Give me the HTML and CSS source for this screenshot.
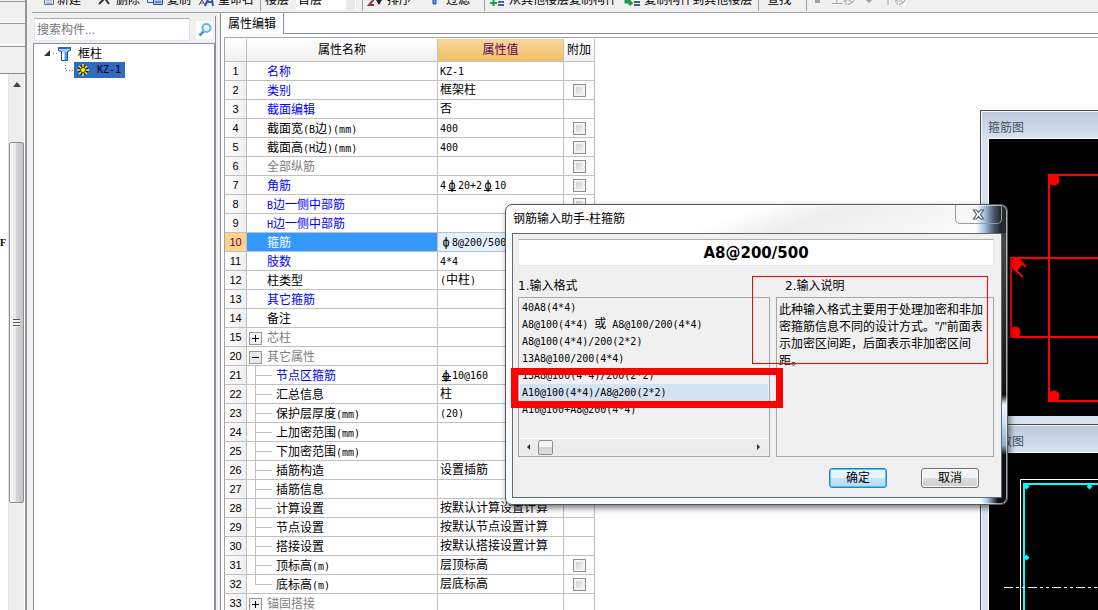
FILE: index.html
```html
<!DOCTYPE html>
<html lang="zh-CN">
<head>
<meta charset="utf-8">
<title>属性编辑</title>
<link rel="stylesheet" href="styles.css">
</head>
<body>
<div class="app">
  <aside class="nav">
    <div class="nav-tabs">
      <button class="nav-tab" aria-label="模块"></button>
      <button class="nav-tab" aria-label="绘图"></button>
      <button class="nav-tab nav-tools" aria-label="工具"></button>
    </div>
    <div class="nav-body">
      <div class="nav-text">F</div>
      <div class="vscroll">
        <svg class="vscroll-up" width="8" height="5" viewBox="0 0 8 5"><path d="M4 0L8 5H0z" fill="#444"/></svg>
        <div class="vscroll-thumb"><i></i></div>
      </div>
    </div>
  </aside>

  <div class="main">
    <div class="toolbar">
      <button class="tool drop"><svg width="16" height="16"><path d="M7.500 1.500h9v11h-9z" fill="#dce9f8" stroke="#56779f"/><path d="M9 5h6M9 8h6M9 11h6" stroke="#88a"/></svg>新建</button>
      <button class="tool"><svg width="16" height="16"><path d="M3 12L13 2M6 2l7 10" stroke="#333" stroke-width="2" fill="none"/></svg>删除</button>
      <button class="tool"><svg width="16" height="16"><path d="M.5 2.500h8v8h-8z" fill="#dce9f8" stroke="#3a5f9c"/><path d="M6.500 5.500h9v7h-9z" fill="#a9c8f0" stroke="#284f98"/><path d="M8 10h6" stroke="#284f98"/></svg>复制</button>
      <button class="tool"><svg width="16" height="16"><path d="M1 13l3-5 3 5M2 11h4" stroke="#555" fill="none"/><path d="M7 14l6-13 2 13M9 10h5" stroke="#2458b8" stroke-width="2" fill="none"/></svg>重命名</button>
      <i class="sep"></i>
      <label for="floor">楼层</label>
      <select id="floor" class="floor"><option>首层</option></select>
      <i class="sep"></i>
      <button class="tool drop"><svg width="16" height="16"><path d="M2 7h5l-5 6h5" stroke="#a03030" stroke-width="2" fill="none"/><path d="M12 1v8" stroke="#222" stroke-width="2"/><path d="M9 8h6l-3 5z" fill="#222"/></svg>排序</button>
      <button class="tool drop"><svg width="16" height="16"><path d="M3 1h11l-4 6v5H7V7z" fill="#5b91dd" stroke="#2458a8"/></svg>过滤</button>
      <i class="sep"></i>
      <button class="tool"><svg width="16" height="16"><path d="M1 11h7M4.500 8v6" stroke="#229a44" stroke-width="2"/><path d="M9 4h6M9 7h6M9 10h6M9 13h6" stroke="#47689b" stroke-width="2"/></svg>从其他楼层复制构件</button>
      <button class="tool"><svg width="16" height="16"><path d="M2 3v7h5M4 8l3 3-2 2" stroke="#229a44" stroke-width="3" fill="none"/><path d="M10 4h6M10 7h6M10 10h6M10 13h6" stroke="#476080" stroke-width="2"/></svg>复制构件到其他楼层</button>
      <i class="sep"></i>
      <button class="tool text-tool">查找</button>
      <i class="sep"></i>
      <button class="tool" disabled><svg width="16" height="16"><path d="M7 1l5 5H9v5H4V6H1z" fill="#a0a0a0"/></svg>上移</button>
      <button class="tool" disabled><svg width="16" height="16"><path d="M4 1h5v5h3l-5 5-5-5h2z" fill="#a0a0a0"/></svg>下移</button>
    </div>

    <div class="work">
      <section class="finder">
        <div class="search">
          <input type="text" placeholder="搜索构件..." aria-label="搜索构件">
          <button aria-label="搜索"><svg width="14" height="14" viewBox="0 0 14 14" fill="none"><path d="M5.500 8.500L1.500 12.500" stroke="#3d96d8" stroke-width="2.500"/><circle cx="8.500" cy="5" r="4" fill="#eaf7ff" stroke="#62b4ea" stroke-width="2"/></svg></button>
        </div>
        <div class="tree">
          <div class="node">
            <svg width="28" height="16" viewBox="0 0 28 16"><path d="M6 4v6H0z" fill="#333"/><path d="M9 7.500h4" stroke="#888" stroke-dasharray="1 2"/><path d="M14.500 1.500h12v3l-3 1v9h-6v-9l-3-1z" fill="#a9cdf5" stroke="#164a9c"/><path d="M14 2h13" stroke="#2c69bd" stroke-width="2"/><path d="M22 6v8" stroke="#5e95dc" stroke-width="2"/><path d="M19 6v8" stroke="#fff" stroke-width="2"/></svg>
            <span>框柱</span>
          </div>
          <div class="node child">
            <svg class="elbow" width="10" height="16"><path d="M.5 0v8.500H10" stroke="#777" fill="none" stroke-dasharray="1 2"/></svg>
            <span class="picked">
              <svg width="12" height="12" viewBox="0 0 12 12"><circle cx="6" cy="6" r="5" fill="#222"/><path d="M6 0v12M0 6h12M2 2l8 8M10 2l-8 8" stroke="#ffec20" stroke-width="1.500"/><circle cx="6" cy="6" r="2.500" fill="#ff0" stroke="#333"/></svg>
              <span class="m">KZ-1</span>
            </span>
          </div>
        </div>
      </section>

      <section class="editor">
        <div class="tabs"><button class="tab">属性编辑</button></div>
        <div class="sheet">
          <table class="props">
            <colgroup><col class="c-no"><col class="c-name"><col class="c-val"><col class="c-add"></colgroup>
            <thead><tr><th></th><th>属性名称</th><th class="hot">属性值</th><th>附加</th></tr></thead>
            <tbody>
              <tr><th>1</th><td class="name key">名称</td><td><span class="m">KZ-1</span></td><td></td></tr>
              <tr><th>2</th><td class="name key">类别</td><td>框架柱</td><td><input type="checkbox" aria-label="附加 类别"></td></tr>
              <tr><th>3</th><td class="name key">截面编辑</td><td>否</td><td></td></tr>
              <tr><th>4</th><td class="name">截面宽<span class="m">(B</span>边<span class="m">)(mm)</span></td><td><span class="m">400</span></td><td><input type="checkbox" aria-label="附加 截面宽"></td></tr>
              <tr><th>5</th><td class="name">截面高<span class="m">(H</span>边<span class="m">)(mm)</span></td><td><span class="m">400</span></td><td><input type="checkbox" aria-label="附加 截面高"></td></tr>
              <tr><th>6</th><td class="name off">全部纵筋</td><td></td><td><input type="checkbox" aria-label="附加 全部纵筋"></td></tr>
              <tr><th>7</th><td class="name key">角筋</td><td><span class="m">4<b class="bar two">ф</b>20+2<b class="bar two">ф</b>10</span></td><td><input type="checkbox" aria-label="附加 角筋"></td></tr>
              <tr><th>8</th><td class="name key"><span class="m">B</span>边一侧中部筋</td><td></td><td><input type="checkbox" aria-label="附加 B边一侧中部筋"></td></tr>
              <tr><th>9</th><td class="name key"><span class="m">H</span>边一侧中部筋</td><td></td><td></td></tr>
              <tr class="current"><th>10</th><td class="name">箍筋</td><td><span class="m"><b class="bar">ф</b>8@200/500</span></td><td></td></tr>
              <tr><th>11</th><td class="name key">肢数</td><td><span class="m">4*4</span></td><td></td></tr>
              <tr><th>12</th><td class="name">柱类型</td><td><span class="m">(</span>中柱<span class="m">)</span></td><td></td></tr>
              <tr><th>13</th><td class="name key">其它箍筋</td><td></td><td></td></tr>
              <tr><th>14</th><td class="name">备注</td><td></td><td></td></tr>
              <tr><th>15</th><td class="name group off"><button class="exp plus" aria-label="展开"></button>芯柱</td><td></td><td></td></tr>
              <tr><th>20</th><td class="name group off"><button class="exp" aria-label="折叠"></button>其它属性</td><td></td><td></td></tr>
              <tr><th>21</th><td class="name sub key">节点区箍筋</td><td><span class="m"><b class="bar three">ф</b>10@160</span></td><td></td></tr>
              <tr><th>22</th><td class="name sub">汇总信息</td><td>柱</td><td></td></tr>
              <tr><th>23</th><td class="name sub">保护层厚度<span class="m">(mm)</span></td><td><span class="m">(20)</span></td><td></td></tr>
              <tr><th>24</th><td class="name sub">上加密范围<span class="m">(mm)</span></td><td></td><td></td></tr>
              <tr><th>25</th><td class="name sub">下加密范围<span class="m">(mm)</span></td><td></td><td></td></tr>
              <tr><th>26</th><td class="name sub">插筋构造</td><td>设置插筋</td><td></td></tr>
              <tr><th>27</th><td class="name sub">插筋信息</td><td></td><td></td></tr>
              <tr><th>28</th><td class="name sub">计算设置</td><td>按默认计算设置计算</td><td></td></tr>
              <tr><th>29</th><td class="name sub">节点设置</td><td>按默认节点设置计算</td><td></td></tr>
              <tr><th>30</th><td class="name sub">搭接设置</td><td>按默认搭接设置计算</td><td></td></tr>
              <tr><th>31</th><td class="name sub">顶标高<span class="m">(m)</span></td><td>层顶标高</td><td><input type="checkbox" aria-label="附加 顶标高"></td></tr>
              <tr><th>32</th><td class="name sub last">底标高<span class="m">(m)</span></td><td>层底标高</td><td><input type="checkbox" aria-label="附加 底标高"></td></tr>
              <tr><th>33</th><td class="name group off"><button class="exp plus" aria-label="展开"></button>锚固搭接</td><td></td><td></td></tr>
            </tbody>
          </table>
        </div>
      </section>
    </div>
  </div>

  <section class="mdi mdi-stirrup">
    <h2>箍筋图</h2>
    <div class="view">
      <svg width="160" height="277" viewBox="989 139 160 277" fill="none" stroke="#f00" stroke-width="2">
        <path d="M1150 175H1049V401H1150M1150 258H1011V337H1150"/>
        <path d="M1013 268l10 9M1018 259l8 8M1017 272v-8h6"/>
        <g fill="#f00" stroke="none"><circle cx="1054" cy="180" r="5.500"/><circle cx="1054" cy="396" r="5.500"/><circle cx="1016" cy="264" r="5.500"/><circle cx="1015" cy="332" r="5.500"/></g>
      </svg>
    </div>
  </section>
  <section class="mdi mdi-param">
    <h2>参数图</h2>
    <div class="view">
      <svg width="160" height="170" viewBox="989 453 160 170" fill="none">
        <path d="M1150 479.500H1020.500V630" stroke="#fff"/>
        <path d="M1150 484H1024V630" stroke="#0ff" stroke-width="2"/>
        <path d="M1004 587.500H1150" stroke="#fff" stroke-dasharray="9 3 3 3 3 3"/>
        <path d="M1026.500 483.500l3 3-3 3-3-3zM1089.500 483.500l3 3-3 3-3-3zM1026.500 554.500l3 3-3 3-3-3z" fill="#0ff"/>
      </svg>
    </div>
  </section>

  <div class="dialog" role="dialog" aria-labelledby="dlg-title">
    <header><span id="dlg-title">钢筋输入助手-柱箍筋</span>
      <button class="close" aria-label="关闭"><svg width="13" height="11" viewBox="0 0 13 11"><path d="M1.500 1h3l2 2.500 2-2.500h3L8.500 5.500l3 4.500h-3l-2-2.500-2 2.500h-3l3-4.500z" fill="#fff" stroke="#555c66" stroke-width="1.200"/></svg></button>
    </header>
    <div class="dlg-body">
      <input class="formula" type="text" value="A8@200/500" aria-label="钢筋信息">
      <div class="cols">
        <div class="col-formats">
          <h3>1.输入格式</h3>
          <div class="box">
            <ul class="m">
              <li>40A8(4*4)</li>
              <li>A8@100(4*4) <span class="cn">或</span> A8@100/200(4*4)</li>
              <li>A8@100(4*4)/200(2*2)</li>
              <li>13A8@100/200(4*4)</li>
              <li>13A8@100(4*4)/200(2*2)</li>
              <li class="sel">A10@100(4*4)/A8@200(2*2)</li>
              <li>A10@100+A8@200(4*4)</li>
            </ul>
            <div class="hscroll">
              <svg width="5" height="8" viewBox="0 0 5 8"><path d="M4 1v6L1 4z" fill="#333"/></svg>
              <i class="hthumb"></i>
              <svg class="to-end" width="5" height="8" viewBox="0 0 5 8"><path d="M1 1v6l3-3z" fill="#333"/></svg>
            </div>
          </div>
        </div>
        <div class="col-notes">
          <h3 class="inset">2.输入说明</h3>
          <div class="box"><p>此种输入格式主要用于处理加密和非加密箍筋信息不同的设计方式。"/"前面表示加密区间距，后面表示非加密区间距。</p></div>
        </div>
      </div>
      <footer><button class="btn ok">确定</button><button class="btn">取消</button></footer>
    </div>
  </div>
  <div class="mark mark-notes"></div>
  <div class="mark mark-row"></div>
</div>
</body>
</html>
```
FILE: styles.css
```css
* { box-sizing: border-box; }
body {
  margin: 0;
  overflow: hidden;
  background: #f0f0f0;
  color: #000;
  font: 12px/16px "Liberation Sans", "Noto Sans CJK SC", sans-serif;
}
button, input, select { font: inherit; color: inherit; margin: 0; padding: 0; }
button { border: 0; background: none; }
h2, h3, p, ul { margin: 0; padding: 0; font-weight: normal; font-size: 12px; }
ul { list-style: none; }
.m { font-family: "DejaVu Sans Mono", "Noto Sans CJK SC", monospace; font-size: 10px; line-height: 10px; }
.cn { font-size: 12px; }

.app { position: relative; display: flex; height: 100vh; overflow: hidden; }

/* left navigation */
.nav { display: flex; flex-direction: column; width: 27px; border-right: 2px solid #94959b; flex: none; }
.nav-tabs { display: flex; flex-direction: column; padding-top: 1px; }
.nav-tab { height: 22px; border-top: 1px solid #999; border-bottom: 1px solid #fff; }
.nav-tools { height: 28px; margin-top: 1px; border-bottom: 1px solid #8b8b90; }
.nav-body { display: flex; flex: 1; background: #fff; }
.nav-text { width: 8px; padding-top: 161px; font: bold 10px/16px "Liberation Serif", serif; overflow: hidden; }
.vscroll { display: flex; flex-direction: column; align-items: center; width: 16px; background: #ededed; border-left: 1px solid #e2e2e2; }
.vscroll-up { margin: 8px 0 55px; flex: none; }
.vscroll-thumb {
  display: flex; align-items: center; justify-content: center;
  width: 15px; height: 361px; border: 1px solid #8f8f8f; border-radius: 2px;
  background: linear-gradient(90deg, #f7f7f7, #e8e8e8 45%, #d3d3d5 50%, #c4c5c8); flex: none;
}
.vscroll-thumb i { width: 7px; height: 8px; background: repeating-linear-gradient(#555 0 1px, #f4f4f4 1px 3px); }

/* toolbar */
.main { display: flex; flex-direction: column; flex: 1; min-width: 0; padding-left: 5px; }
.toolbar { display: flex; align-items: center; gap: 7px; height: 25px; margin-top: -12px; padding-left: 5px; border-bottom: 1px solid #a0a0a0; white-space: nowrap; flex: none; }
.tool { display: flex; align-items: center; gap: 4px; flex: none; }
.tool svg { overflow: visible; }
.drop { padding-right: 8px; }
.text-tool { padding: 0 9px 0 4px; }
.tool:disabled { color: #a0a0a0; text-shadow: 1px 1px #fff; }
.sep { width: 1px; height: 22px; margin: 0 -3px 0 -1px; background: #a0a0a0; flex: none; }
.floor { width: 60px; height: 20px; padding-left: 2px; border: 0; background: linear-gradient(#e9e9e9, #e9e9e9) 50px 0 / 9px 100% no-repeat #fff; appearance: none; }

/* component finder */
.work { display: flex; flex: 1; min-height: 0; padding-left: 1px; gap: 4px; }
.finder { display: flex; flex-direction: column; width: 183px; padding-top: 3px; flex: none; }
.search { display: flex; align-items: center; gap: 6px; padding: 2px 0 2px 1px; border-right: 1px solid #8e8f98; }
.search input { flex: 1; min-width: 0; height: 23px; padding: 0 2px; border: 1px solid #dfe6f0; border-top-color: #ababb3; background: #fff; }
.search input::placeholder { color: #777; opacity: 1; }
.search button { display: flex; align-items: center; justify-content: center; width: 17px; height: 18px; margin-right: 2px; background: #fff; }
.tree { flex: 1; padding: 2px 0 0 10px; background: #fff; border: solid #8e8f98; border-width: 1px 2px 0 1px; }
.node { display: flex; align-items: center; gap: 6px; height: 16px; }
.node.child { gap: 0; padding-left: 21px; }
.elbow { margin-right: -1px; }
.picked { display: flex; align-items: center; gap: 8px; height: 16px; padding: 0 4px 0 3px; background: #316ac5; }

/* property sheet */
.editor { display: flex; flex-direction: column; flex: 1; min-width: 0; background: #fff; border-left: 1px solid #8e8f98; }
.tabs { display: flex; height: 21px; flex: none; }
.tabs::after { content: ""; flex: 1; border-bottom: 1px solid #8e8f98; }
.tab { width: 63px; border-right: 1px solid #8e8f98; }
.sheet { flex: 1; min-height: 0; margin: 3px 0 0 3px; padding-top: 1px; border: solid #a5a5a8; border-width: 1px 0 0 1px; overflow: hidden; }
.props { width: 370px; table-layout: fixed; border-collapse: separate; border-spacing: 0; }
.c-no { width: 22px; } .c-name { width: 191px; } .c-val { width: 126px; } .c-add { width: 31px; }
.props th, .props td { height: 19px; padding: 0; border: solid #c0c0c0; border-width: 0 1px 1px 0; line-height: 14px; font-weight: normal; white-space: nowrap; }
.props thead th { height: 23px; background: linear-gradient(#fff, #f0f0f0); }
.props thead .hot { background: linear-gradient(#fad7a0, #f1bf62); color: #5b005b; }
.props tbody th { font-size: 11px; background: linear-gradient(90deg, #fff, #efefef); }
.props td { padding-left: 2px; }
.props td:last-child { padding: 0; text-align: center; }
.props .name { padding: 1px 0 0 20px; }
.props .key { color: #00f; }
.props .off { color: #808080; }
.props .group { padding-left: 2px; }
.props .sub {
  padding-left: 29px;
  background:
    linear-gradient(#c0c0c0, #c0c0c0) 8px 0 / 1px 19px no-repeat,
    linear-gradient(#c0c0c0, #c0c0c0) 8px 9px / 17px 1px no-repeat;
}
.props .last { background-size: 1px 9px, 17px 1px; }
.current th { background: #ffd28a !important; color: #5b005b; }
.current .name { background: #3399ff; color: #fff; }
.current td:nth-child(3) { background: #e2f0ff; }
.bar { display: inline-block; width: 12px; height: 11px; font-weight: normal; font-size: 12px; line-height: 11px; text-align: center; vertical-align: baseline; }
.two { background: linear-gradient(#000, #000) 2px 10px / 8px 1px no-repeat; }
.three { background: linear-gradient(#000, #000) 2px 10px / 9px 1px no-repeat, linear-gradient(#000, #000) 2px 6px / 9px 1px no-repeat; }
.exp { width: 13px; height: 13px; margin-right: 5px; vertical-align: -2px; border: 1px solid #999; background: linear-gradient(#000, #000) 2px 5px / 7px 1px no-repeat, #e8e9ec; }
.plus { background: linear-gradient(#000, #000) 2px 5px / 7px 1px no-repeat, linear-gradient(#000, #000) 5px 2px / 1px 7px no-repeat, #f2f2f4; }
.props input { display: block; width: 13px; height: 13px; margin: 0 auto; appearance: none; border: 1px solid #8e8f8f; background: linear-gradient(135deg, #c4c9d1, #fafafa); box-shadow: inset 0 0 0 2px #f4f4f4; }

/* drawing windows */
.mdi { position: absolute; left: 980px; right: -8px; padding-left: 7px; border: solid #4a4a4a; border-width: 1px 0 0 1px; box-shadow: inset 1px 1px #f4f8fc; background: #d7e3f1; }
.mdi h2 { height: 28px; padding-top: 9px; color: #455463; background: linear-gradient(#bccbdc, #d7e3f1) 0 1px no-repeat; margin-left: -6px; padding-left: 6px; }
.view { overflow: hidden; background: #000; border: solid #fff; border-width: 1px 0 0 1px; margin-top: -1px; }
.view svg { display: block; }
.mdi-stirrup { top: 110px; height: 314px; }
.mdi-param { top: 424px; bottom: 0; }

/* input assistant */
.dialog {
  position: absolute; left: 505px; top: 204px; width: 503px; height: 301px;
  display: flex; flex-direction: column; padding: 0 5px 6px 6px;
  border: 1px solid #55585c; border-radius: 7px;
  background:
    linear-gradient(90deg, transparent 470px, #a9c8e8 478px, #46566a 488px, #25282c 495px) 0 0 / 100% 28px no-repeat,
    linear-gradient(transparent 195px, #cfe5fb 215px, #8fb0d0 240px, #0c0e12 250px) 100% 0 / 5px 100% no-repeat,
    linear-gradient(90deg, #0000 475px, #9fc0e4 482px, #0c0e12 492px) 0 100% / 100% 6px no-repeat,
    linear-gradient(#444 40px, #111 190px, #0000 200px) 100% 0 / 5px 100% no-repeat,
    linear-gradient(160deg, #fff 45%, #ededed 60%, #fff) 0 0 / 100% 28px no-repeat,
    linear-gradient(#e8ffff, #fff 20%, #f5fbff);
  box-shadow: inset 0 0 0 1px #ffffff99, 2px 3px 6px #0008;
}
.dialog header { display: flex; justify-content: space-between; height: 28px; padding-left: 1px; flex: none; }
.dialog header span { padding-top: 6px; }
.close { display: flex; align-items: center; justify-content: center; width: 47px; height: 19px; border: 1px solid #9a9ca0; border-top: 0; border-radius: 0 0 5px 5px; }
.dlg-body { display: flex; flex-direction: column; flex: 1; min-height: 0; padding: 5px 7px 9px 5px; background: #f0f0f0; border: 1px solid #66696d; }
.formula { width: 100%; height: 27px; border: 1px solid #e3e9ef; border-top-color: #abadb3; background: #fff; text-align: center; font: bold 15px/20px "DejaVu Sans", sans-serif; }
.cols { display: flex; gap: 6px; padding-top: 11px; }
.col-formats { width: 252px; }
.col-notes { flex: 1; min-width: 0; }
.cols h3 { height: 20px; line-height: 18px; font-family: "DejaVu Sans", "Noto Sans CJK SC", sans-serif; }
.inset { padding-left: 9px; }
.box { display: flex; flex-direction: column; height: 160px; padding: 1px; border: 1px solid #a5a8ae; }
.box ul { flex: 1; }
.box li { height: 17px; line-height: 17px; padding-left: 2px; white-space: pre; }
.box .sel { background: #d3e3f1; }
.box p { padding: 3px 0 0 1px; line-height: 17px; }
.hscroll { display: flex; align-items: center; height: 17px; padding: 0 7px 0 6px; background: #ececec; border-top: 1px solid #fff; }
.hthumb { width: 15px; height: 15px; margin-left: 7px; border: 1px solid #8f8f8f; border-radius: 2px; background: linear-gradient(#f4f4f4 45%, #d2d3d6 50%, #dcdde0); }
.to-end { margin-left: auto; }
.dialog footer { display: flex; justify-content: flex-end; gap: 34px; margin-top: auto; padding-right: 15px; }
.btn { width: 58px; height: 20px; border: 1px solid #707070; border-radius: 3px; background: linear-gradient(#f3f3f3 48%, #dcdcdc 52%, #cfcfcf); box-shadow: inset 0 0 0 1px #fcfcfc; line-height: 18px; }
.ok { border-color: #3c7fb1; background: linear-gradient(#eaf6fd 48%, #c6e6fa 52%, #b0dcf6); box-shadow: inset 0 0 0 1px #38cdf8; }

/* red call-outs */
.mark { position: absolute; border: 1px solid #f00; pointer-events: none; }
.mark-notes { left: 752px; top: 276px; width: 236px; height: 88px; }
.mark-row { left: 511px; top: 368px; width: 272px; height: 40px; border-width: 7px; }
```
